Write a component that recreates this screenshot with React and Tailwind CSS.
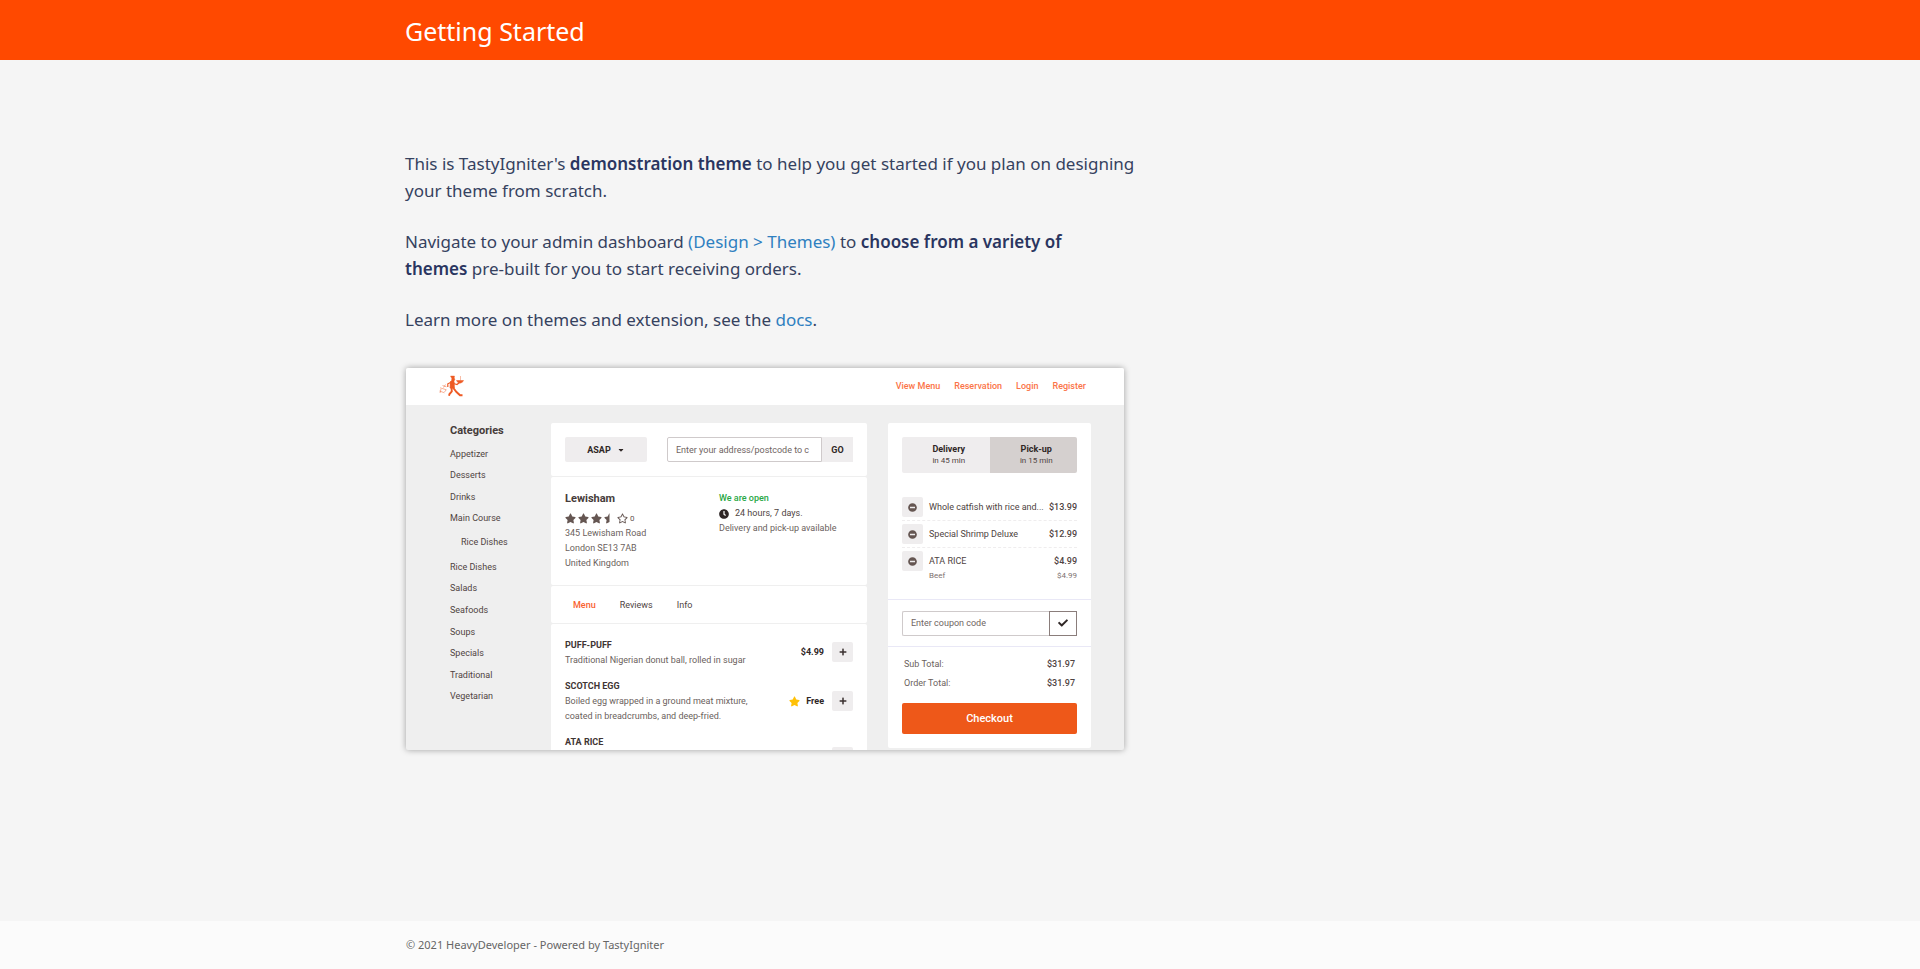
import React from "react";
import {
  FaStar,
  FaStarHalf,
  FaRegStar,
  FaClock,
  FaMinusCircle,
  FaPlus,
  FaCheck,
  FaCaretDown,
} from "react-icons/fa";

const NAV_LINKS = ["View Menu", "Reservation", "Login", "Register"];

const CATEGORIES_TOP = ["Appetizer", "Desserts", "Drinks", "Main Course"];
const CATEGORIES_BOTTOM = [
  "Rice Dishes",
  "Salads",
  "Seafoods",
  "Soups",
  "Specials",
  "Traditional",
  "Vegetarian",
];

const CART_ITEMS = [
  { name: "Whole catfish with rice and...", price: "$13.99" },
  { name: "Special Shrimp Deluxe", price: "$12.99" },
];

// Running waiter with a tray
const Logo = () => (
  <svg width="26" height="22" viewBox="0 0 26 22" fill="none" stroke="#ee5a24">
    <path d="M11.500 1h4l-.3 2.200.8.8-1 2.200h-2.600l.4-2.700z" fill="#ee5a24" strokeWidth=".4" />
    <path d="M11.500 6.500h3.500l.2 6.500h-4z" fill="#ee5a24" strokeWidth="1" />
    <path d="M14.500 8.500l3.500 1 3-2.500" strokeWidth="1.300" />
    <path d="M11.500 7.500l-2.700 1.300v3.200" strokeWidth="1.200" />
    <path d="M17.500 5.500h7l-1.200 1.800-2.300.9-2.300-.9z" fill="#ee5a24" strokeWidth=".5" />
    <path d="M21.500 1v4.500" strokeWidth=".8" opacity=".5" />
    <path d="M14 12.500l3.500 4.500 3.500 3.300h2.500" strokeWidth="1.900" />
    <path d="M12.500 12.500l.3 4-2.300 2.500-.5 1.800" strokeWidth="1.900" />
    <path d="M3.500 10.500l4 1.300M1 12.800l6.500 2M.5 16l5 1.800M6.500 9.500l-2 3M2 14l-1 4M7 15l-1.500 2" strokeWidth=".8" opacity=".6" />
  </svg>
);

const CategoryList = ({ items, className }) => (
  <ul className={`flex flex-col ${className}`}>
    {items.map((item) => (
      <li key={item} className="flex flex-1 items-center">
        <a href="#">{item}</a>
      </li>
    ))}
  </ul>
);

const AddButton = () => (
  <button
    aria-label="Add"
    className="flex h-5 w-[21px] shrink-0 items-center justify-center rounded-xs bg-[#efedee] text-[#3b3130]"
  >
    <FaPlus size={8} />
  </button>
);

const MenuRow = ({ name, description, price, special, className }) => (
  <div className={`flex justify-between ${className}`}>
    <div className="w-[200px]">
      <h4 className="font-bold text-[#3f3534]">{name}</h4>
      <p className="text-[#6b5f5d]">{description}</p>
    </div>
    <div className="flex h-5 items-center gap-2 font-bold text-[#2f2726]">
      {special && <FaStar size={11} className="-mr-0.5 text-[#ffc107]" />}
      {price && <span>{price}</span>}
      <AddButton />
    </div>
  </div>
);

const RemoveButton = () => (
  <button
    aria-label="Remove"
    className="flex h-5 w-[21px] shrink-0 items-center justify-center rounded-xs bg-[#efedee] text-[#655652]"
  >
    <FaMinusCircle size={9} />
  </button>
);

const StorefrontHeader = () => (
  <div className="flex h-[37px] items-center justify-between bg-white pr-[38px] pb-0.5 pl-[33px]">
    <Logo />
    <nav className="flex gap-3.5 font-medium text-[#fb7448]">
      {NAV_LINKS.map((link) => (
        <a key={link} href="#">
          {link}
        </a>
      ))}
    </nav>
  </div>
);

const Sidebar = () => (
  <aside className="w-[145px] shrink-0 pl-11 text-[#4f4442]">
    <h3 className="mb-1 text-[11px] leading-4 font-bold text-[#463c3a]">
      Categories
    </h3>
    <CategoryList items={CATEGORIES_TOP} className="h-[86px]" />
    <a href="#" className="block pl-[11px] leading-[27px]">
      Rice Dishes
    </a>
    <CategoryList items={CATEGORIES_BOTTOM} className="h-[151px]" />
  </aside>
);

const StoreMenu = () => (
  <section className="flex min-w-0 flex-1 flex-col gap-px">
    <div className="flex h-[53px] items-center justify-between rounded-xs bg-white px-3.5">
      <button className="flex h-[25px] w-[82px] items-center justify-center gap-1.5 rounded-xs bg-[#efedee] font-bold text-[#2f2726]">
        ASAP
        <FaCaretDown size={8} />
      </button>
      <div className="flex">
        <input
          type="text"
          aria-label="Delivery address"
          placeholder="Enter your address/postcode to c"
          className="h-[25px] w-[155px] rounded-l-xs border border-[#cfcacb] px-2 placeholder:text-[#6f6563]"
        />
        <button className="h-[25px] w-[31px] bg-[#efedee] font-bold text-[#2f2726]">
          GO
        </button>
      </div>
    </div>

    <div className="flex h-[108px] rounded-xs bg-white px-3.5 pt-3.5 leading-[15px]">
      <div className="w-[154px] text-[#6b5f5d]">
        <h3 className="mb-1 text-[11px] leading-4 font-bold text-[#463c3a]">
          Lewisham
        </h3>
        <div className="flex h-[15px] items-center gap-0.5 text-[#655652]">
          <FaStar size={11} />
          <FaStar size={11} />
          <FaStar size={11} />
          <FaStarHalf size={11} />
          <FaRegStar size={11} />
          <span className="text-[8px]">0</span>
        </div>
        <p>345 Lewisham Road</p>
        <p>London SE13 7AB</p>
        <p>United Kingdom</p>
      </div>
      <div className="text-[#6b5f5d]">
        <p className="font-medium text-[#28a745]">We are open</p>
        <p className="flex items-center gap-1.5 text-[#4f4442]">
          <FaClock size={10} className="text-[#2f2726]" />
          24 hours, 7 days.
        </p>
        <p>Delivery and pick-up available</p>
      </div>
    </div>

    <div className="flex h-[37px] items-center gap-6 rounded-xs bg-white px-[22px] text-[#4f4442]">
      <a href="#" className="font-medium text-[#f9622f]">
        Menu
      </a>
      <a href="#">Reviews</a>
      <a href="#">Info</a>
    </div>

    <div className="flex-1 rounded-t-xs bg-white px-3.5 pt-3.5 leading-[15px]">
      <MenuRow
        name="PUFF-PUFF"
        description="Traditional Nigerian donut ball, rolled in sugar"
        price="$4.99"
        className="h-[41px] [&>div:last-child]:mt-1"
      />
      <MenuRow
        name="SCOTCH EGG"
        description="Boiled egg wrapped in a ground meat mixture, coated in breadcrumbs, and deep-fried."
        price="Free"
        special
        className="h-14 [&>div:last-child]:mt-3"
      />
      <MenuRow name="ATA RICE" className="h-[15px] [&>div:last-child]:mt-3" />
    </div>
  </section>
);

const Cart = () => (
  <section className="h-[325px] w-[203px] shrink-0 rounded-xs bg-white text-[#4f4442]">
    <div className="h-[177px] border-b border-[#e9e8f6] px-3.5 pt-3.5">
      <div className="mb-6 flex h-9 overflow-hidden rounded-xs leading-3">
        <button className="flex-1 bg-[#efedee] pl-1.5">
          <span className="block font-bold text-[#2f2726]">Delivery</span>
          <span className="block text-[8px]">in 45 min</span>
        </button>
        <button className="flex-1 bg-[#d5d0cf] pl-1.5">
          <span className="block font-bold text-[#2f2726]">Pick-up</span>
          <span className="block text-[8px]">in 15 min</span>
        </button>
      </div>
      {CART_ITEMS.map((item) => (
        <div
          key={item.name}
          className="mb-[3px] flex h-6 items-start border-b border-dashed border-[#efedee] leading-5"
        >
          <RemoveButton />
          <span className="ml-1.5 flex-1 whitespace-nowrap">{item.name}</span>
          <span className="font-medium">{item.price}</span>
        </div>
      ))}
      <div className="flex">
        <RemoveButton />
        <div className="ml-1.5 flex-1">
          <div className="flex justify-between leading-5">
            <span>ATA RICE</span>
            <span className="font-medium">$4.99</span>
          </div>
          <div className="flex justify-between text-[8px] leading-[10px] text-[#7d716f]">
            <span>Beef</span>
            <span>$4.99</span>
          </div>
        </div>
      </div>
    </div>

    <div className="flex h-[47px] items-center border-b border-[#e9e8f6] px-3.5">
      <input
        type="text"
        aria-label="Coupon code"
        placeholder="Enter coupon code"
        className="h-[25px] min-w-0 flex-1 rounded-l-xs border border-r-0 border-[#cfcacb] px-2 placeholder:text-[#6f6563]"
      />
      <button
        aria-label="Apply coupon"
        className="flex h-[25px] w-7 items-center justify-center border border-[#8a7d7b] text-[#2f2726]"
      >
        <FaCheck size={10} />
      </button>
    </div>

    <div className="px-3.5 pt-2">
      <dl className="mb-2.5 px-0.5 leading-[19px]">
        <div className="flex justify-between">
          <dt className="text-[#6b5f5d]">Sub Total:</dt>
          <dd className="font-medium">$31.97</dd>
        </div>
        <div className="flex justify-between">
          <dt className="text-[#6b5f5d]">Order Total:</dt>
          <dd className="font-medium">$31.97</dd>
        </div>
      </dl>
      <button className="h-[31px] w-full rounded-xs bg-[#ee5819] text-[11px] font-medium text-white">
        Checkout
      </button>
    </div>
  </section>
);

const StorefrontPreview = () => (
  <div className="mx-px h-[382px] max-w-[718px] overflow-hidden rounded-xs bg-[#efefef] font-[Roboto,sans-serif] text-[9px] leading-3 font-normal shadow-[0_0_6px_rgba(0,0,0,0.35)]">
    <StorefrontHeader />
    <div className="flex h-[345px] pt-[18px] pr-[33px]">
      <Sidebar />
      <StoreMenu />
      <div className="w-[21px] shrink-0" />
      <Cart />
    </div>
  </div>
);

const App = () => {
  return (
    <div className="flex min-h-screen flex-col bg-[#f5f5f5] font-['Noto_Sans','Open_Sans',sans-serif] text-[#36425f]">
      <header className="bg-[#ff4900]">
        <div className="mx-auto flex h-[60px] max-w-[1140px] items-center px-[15px] pt-1">
          <h1 className="text-[25px] text-white">Getting Started</h1>
        </div>
      </header>

      <main className="mx-auto w-full max-w-[1140px] flex-1 px-[15px] pt-[90px] pb-24">
        <div className="max-w-[735px] text-[17px] leading-[27px]">
          <p className="mb-6">
            This is TastyIgniter's{" "}
            <strong className="font-semibold text-[#2a3560]">
              demonstration theme
            </strong>{" "}
            to help you get started if you plan on designing your theme from
            scratch.
          </p>
          <p className="mb-6">
            Navigate to your admin dashboard{" "}
            <a href="#" className="text-[#2f80c0]">
              (Design &gt; Themes)
            </a>{" "}
            to{" "}
            <strong className="font-semibold text-[#2a3560]">
              choose from a variety of <br />
              themes
            </strong>{" "}
            pre-built for you to start receiving orders.
          </p>
          <p className="mb-[35px]">
            Learn more on themes and extension, see the{" "}
            <a href="#" className="text-[#2f80c0]">
              docs
            </a>
            .
          </p>
          <StorefrontPreview />
        </div>
      </main>

      <footer className="bg-[#fbfbfb]">
        <div className="mx-auto flex h-12 max-w-[1140px] items-center px-4 text-[11px] text-[#666666]">
          © 2021 HeavyDeveloper - Powered by TastyIgniter
        </div>
      </footer>
    </div>
  );
};

export default App;
